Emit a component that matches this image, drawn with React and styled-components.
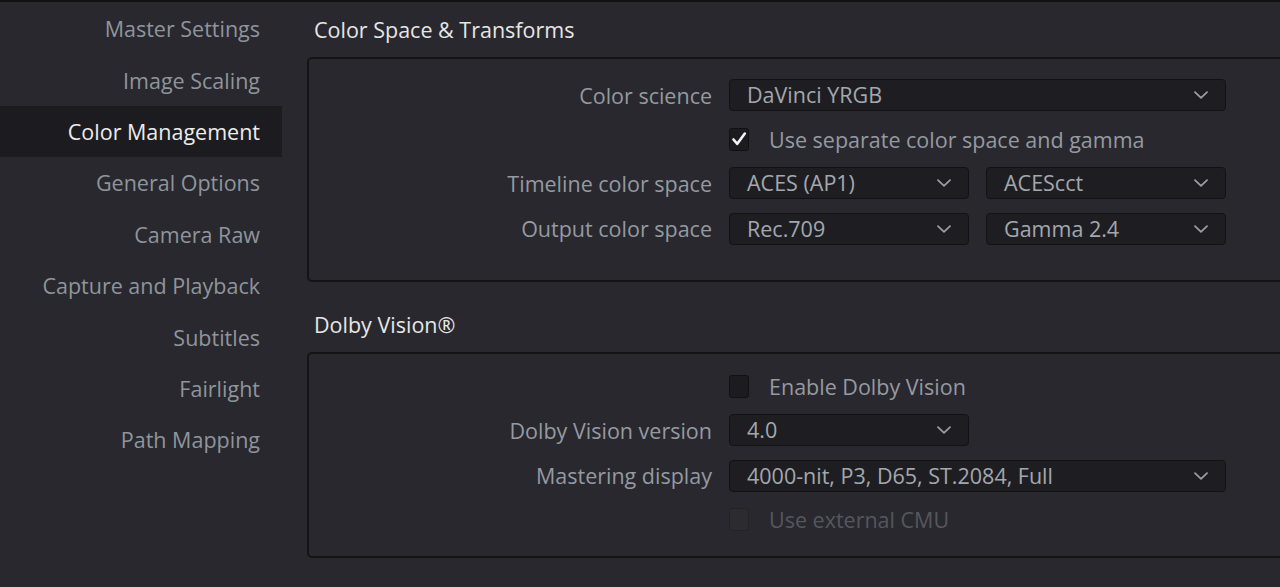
import React from 'react';
import styled, { createGlobalStyle } from 'styled-components';

const GlobalStyle = createGlobalStyle`
  html, body {
    margin: 0;
    padding: 0;
    background: #28282e;
    overflow: hidden;
  }
  body {
    font-family: "Open Sans", "Noto Sans", "Liberation Sans", sans-serif;
  }
`;

const navItems = [
  'Master Settings',
  'Image Scaling',
  'Color Management',
  'General Options',
  'Camera Raw',
  'Capture and Playback',
  'Subtitles',
  'Fairlight',
  'Path Mapping',
];

function Chevron() {
  return (
    <svg width="14" height="8" viewBox="0 0 14 8" fill="none">
      <path d="M1 1.2 L7 6.8 L13 1.2" stroke="#9a9ca3" strokeWidth="1.8" strokeLinecap="round" strokeLinejoin="round" />
    </svg>
  );
}

function Check() {
  return (
    <svg width="16" height="16" viewBox="0 0 16 16" fill="none">
      <path d="M2.5 8.5 L6.3 12.8 L13.8 2.6" stroke="#f4f4f4" strokeWidth="2.6" strokeLinecap="round" strokeLinejoin="round" />
    </svg>
  );
}

function Select({ value }) {
  return (
    <Dropdown>
      <span>{value}</span>
      <Chevron />
    </Dropdown>
  );
}

function CheckRow({ label, checked, disabled }) {
  return (
    <Row>
      <span />
      <CheckLabel $disabled={disabled}>
        <Box $disabled={disabled}>{checked && <Check />}</Box>
        {label}
      </CheckLabel>
    </Row>
  );
}

export default function App() {
  return (
    <>
      <GlobalStyle />
      <Page>
        <Sidebar>
          {navItems.map((item) => (
            <NavItem key={item} $active={item === 'Color Management'}>
              {item}
            </NavItem>
          ))}
        </Sidebar>
        <Main>
          <Section>
            <SectionTitle>Color Space &amp; Transforms</SectionTitle>
            <Panel $pt={20} $pb={35}>
              <Row>
                <Label>Color science</Label>
                <Select value="DaVinci YRGB" />
              </Row>
              <CheckRow label="Use separate color space and gamma" checked />
              <Row>
                <Label>Timeline color space</Label>
                <Pair>
                  <Select value="ACES (AP1)" />
                  <Select value="ACEScct" />
                </Pair>
              </Row>
              <Row>
                <Label>Output color space</Label>
                <Pair>
                  <Select value="Rec.709" />
                  <Select value="Gamma 2.4" />
                </Pair>
              </Row>
            </Panel>
          </Section>
          <Section>
            <SectionTitle>Dolby Vision®</SectionTitle>
            <Panel $pt={18} $pb={22}>
              <CheckRow label="Enable Dolby Vision" />
              <Row>
                <Label>Dolby Vision version</Label>
                <Pair>
                  <Select value="4.0" />
                </Pair>
              </Row>
              <Row>
                <Label>Mastering display</Label>
                <Select value="4000-nit, P3, D65, ST.2084, Full" />
              </Row>
              <CheckRow label="Use external CMU" disabled />
            </Panel>
          </Section>
        </Main>
      </Page>
    </>
  );
}

const Page = styled.div`
  display: flex;
  width: 1280px;
  height: 587px;
  border-top: 2px solid #111114;
  box-sizing: border-box;
  background: #28282e;
  overflow: hidden;
`;

const Sidebar = styled.nav`
  width: 282px;
  flex-shrink: 0;
  padding-top: 1px;
  display: flex;
  flex-direction: column;
`;

const NavItem = styled.div`
  height: 51.4px;
  display: flex;
  align-items: center;
  justify-content: flex-end;
  padding-right: 22px;
  font-size: 21.5px;
  color: ${(p) => (p.$active ? '#ececec' : '#8f959c')};
  background: ${(p) => (p.$active ? '#1c1c20' : 'transparent')};
`;

const Main = styled.main`
  flex: 1;
  margin-left: 25px;
  margin-right: -20px;
  display: flex;
  flex-direction: column;
  gap: 15px;
`;

const Section = styled.section`
  display: flex;
  flex-direction: column;
`;

const SectionTitle = styled.h2`
  margin: 0;
  height: 55px;
  display: flex;
  align-items: center;
  padding-left: 7px;
  font-size: 21.5px;
  font-weight: 500;
  color: #e6e6e6;
`;

const Panel = styled.div`
  border: 2px solid #141417;
  border-radius: 5px;
  padding: ${(p) => p.$pt}px 0 ${(p) => p.$pb}px;
  display: flex;
  flex-direction: column;
  gap: 13.5px;
`;

const Row = styled.div`
  display: grid;
  grid-template-columns: 403px 497px;
  column-gap: 17px;
  align-items: center;
  min-height: 29px;
`;

const Label = styled.span`
  text-align: right;
  font-size: 21.5px;
  color: #959aa1;
`;

const Pair = styled.div`
  display: grid;
  grid-template-columns: 240px 240px;
  column-gap: 17px;
`;

const Dropdown = styled.div`
  height: 32px;
  box-sizing: border-box;
  border: 1px solid #121215;
  border-radius: 4px;
  background: #1e1e22;
  display: flex;
  align-items: center;
  justify-content: space-between;
  padding: 0 17px 0 17px;
  font-size: 21.5px;
  color: #a3a8ae;
  span {
    line-height: 1;
  }
`;

const CheckLabel = styled.label`
  display: flex;
  align-items: center;
  gap: 20px;
  font-size: 21.5px;
  color: ${(p) => (p.$disabled ? '#55575d' : '#959aa1')};
`;

const Box = styled.span`
  width: 20px;
  height: 23px;
  box-sizing: border-box;
  border: 1px solid ${(p) => (p.$disabled ? '#232327' : '#111114')};
  border-radius: 3px;
  background: ${(p) => (p.$disabled ? '#2b2b30' : '#1c1c20')};
  display: flex;
  align-items: center;
  justify-content: center;
`;
